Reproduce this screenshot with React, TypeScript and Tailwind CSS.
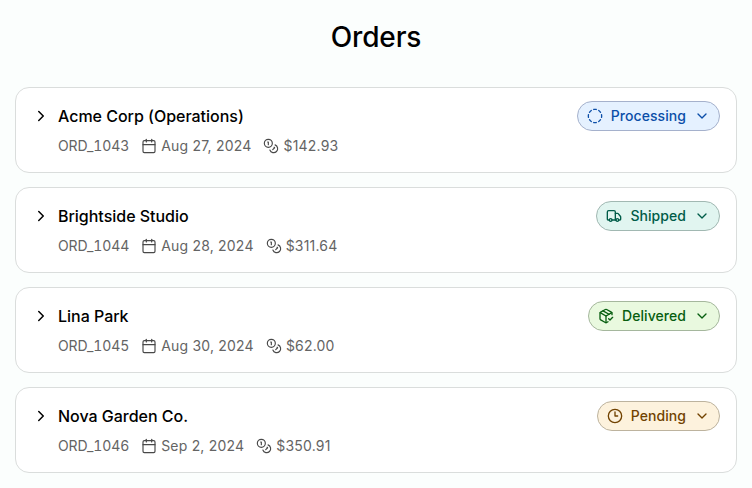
import { Calendar, ChevronDown, ChevronRight, CircleDashed, Clock3, Coins, PackageCheck, Truck, type LucideIcon } from "lucide-react";

type Status = { label: string; icon: LucideIcon; style: string };

const statuses: Record<string, Status> = {
  processing: { label: "Processing", icon: CircleDashed, style: "bg-[#e5f1ff] border-[#a5b1cc] text-[#0b4ea8]" },
  shipped: { label: "Shipped", icon: Truck, style: "bg-[#e1f5f0] border-[#a1b8b2] text-[#005c48]" },
  delivered: { label: "Delivered", icon: PackageCheck, style: "bg-[#e9f9df] border-[#a5b79d] text-[#075e10]" },
  pending: { label: "Pending", icon: Clock3, style: "bg-[#fdf2dd] border-[#bdb39e] text-[#714200]" },
};

const orders = [
  { name: "Acme Corp (Operations)", id: "ORD_1043", date: "Aug 27, 2024", total: "$142.93", status: "processing" },
  { name: "Brightside Studio", id: "ORD_1044", date: "Aug 28, 2024", total: "$311.64", status: "shipped" },
  { name: "Lina Park", id: "ORD_1045", date: "Aug 30, 2024", total: "$62.00", status: "delivered" },
  { name: "Nova Garden Co.", id: "ORD_1046", date: "Sep 2, 2024", total: "$350.91", status: "pending" },
];

function StatusPill({ status }: { status: Status }) {
  const Icon = status.icon;
  return (
    <button className={`flex h-[30px] items-center rounded-full border pl-[9px] pr-[9px] text-sm font-medium tracking-[0.06px] ${status.style}`}>
      <Icon size={16} strokeWidth={2} />
      <span className="ml-2">{status.label}</span>
      <ChevronDown className="ml-2" size={16} strokeWidth={2} />
    </button>
  );
}

export default function App() {
  return (
    <main className="min-h-screen bg-[#fbfefd] px-[15px] pt-[17px] font-['Inter',sans-serif] text-black">
      <h1 className="text-center text-[28px] leading-10 font-medium tracking-[-0.14px]">Orders</h1>
      <ul className="mt-[30px] flex flex-col gap-[14px]">
        {orders.map((order) => (
          <li key={order.id} className="flex h-[86px] items-start rounded-[14px] border border-[#dadddc] bg-white pt-[13px] pr-4 pl-4">
            <ChevronRight className="mt-[6px] shrink-0" size={18} strokeWidth={2} />
            <div className="ml-2 flex-1">
              <h2 className="text-base leading-[30px] font-medium tracking-[-0.02px]">{order.name}</h2>
              <div className="mt-[5px] flex items-center text-sm leading-5 tracking-[0.2px] text-[#646464]">
                <span className="tracking-[-0.1px] tabular-nums">{order.id}</span>
                <Calendar className="ml-3 text-[#484848]" size={16} strokeWidth={1.75} />
                <span className="ml-1">{order.date}</span>
                <Coins className="ml-3 text-[#484848]" size={16} strokeWidth={1.75} />
                <span className="ml-1">{order.total}</span>
              </div>
            </div>
            <StatusPill status={statuses[order.status]} />
          </li>
        ))}
      </ul>
    </main>
  );
}
